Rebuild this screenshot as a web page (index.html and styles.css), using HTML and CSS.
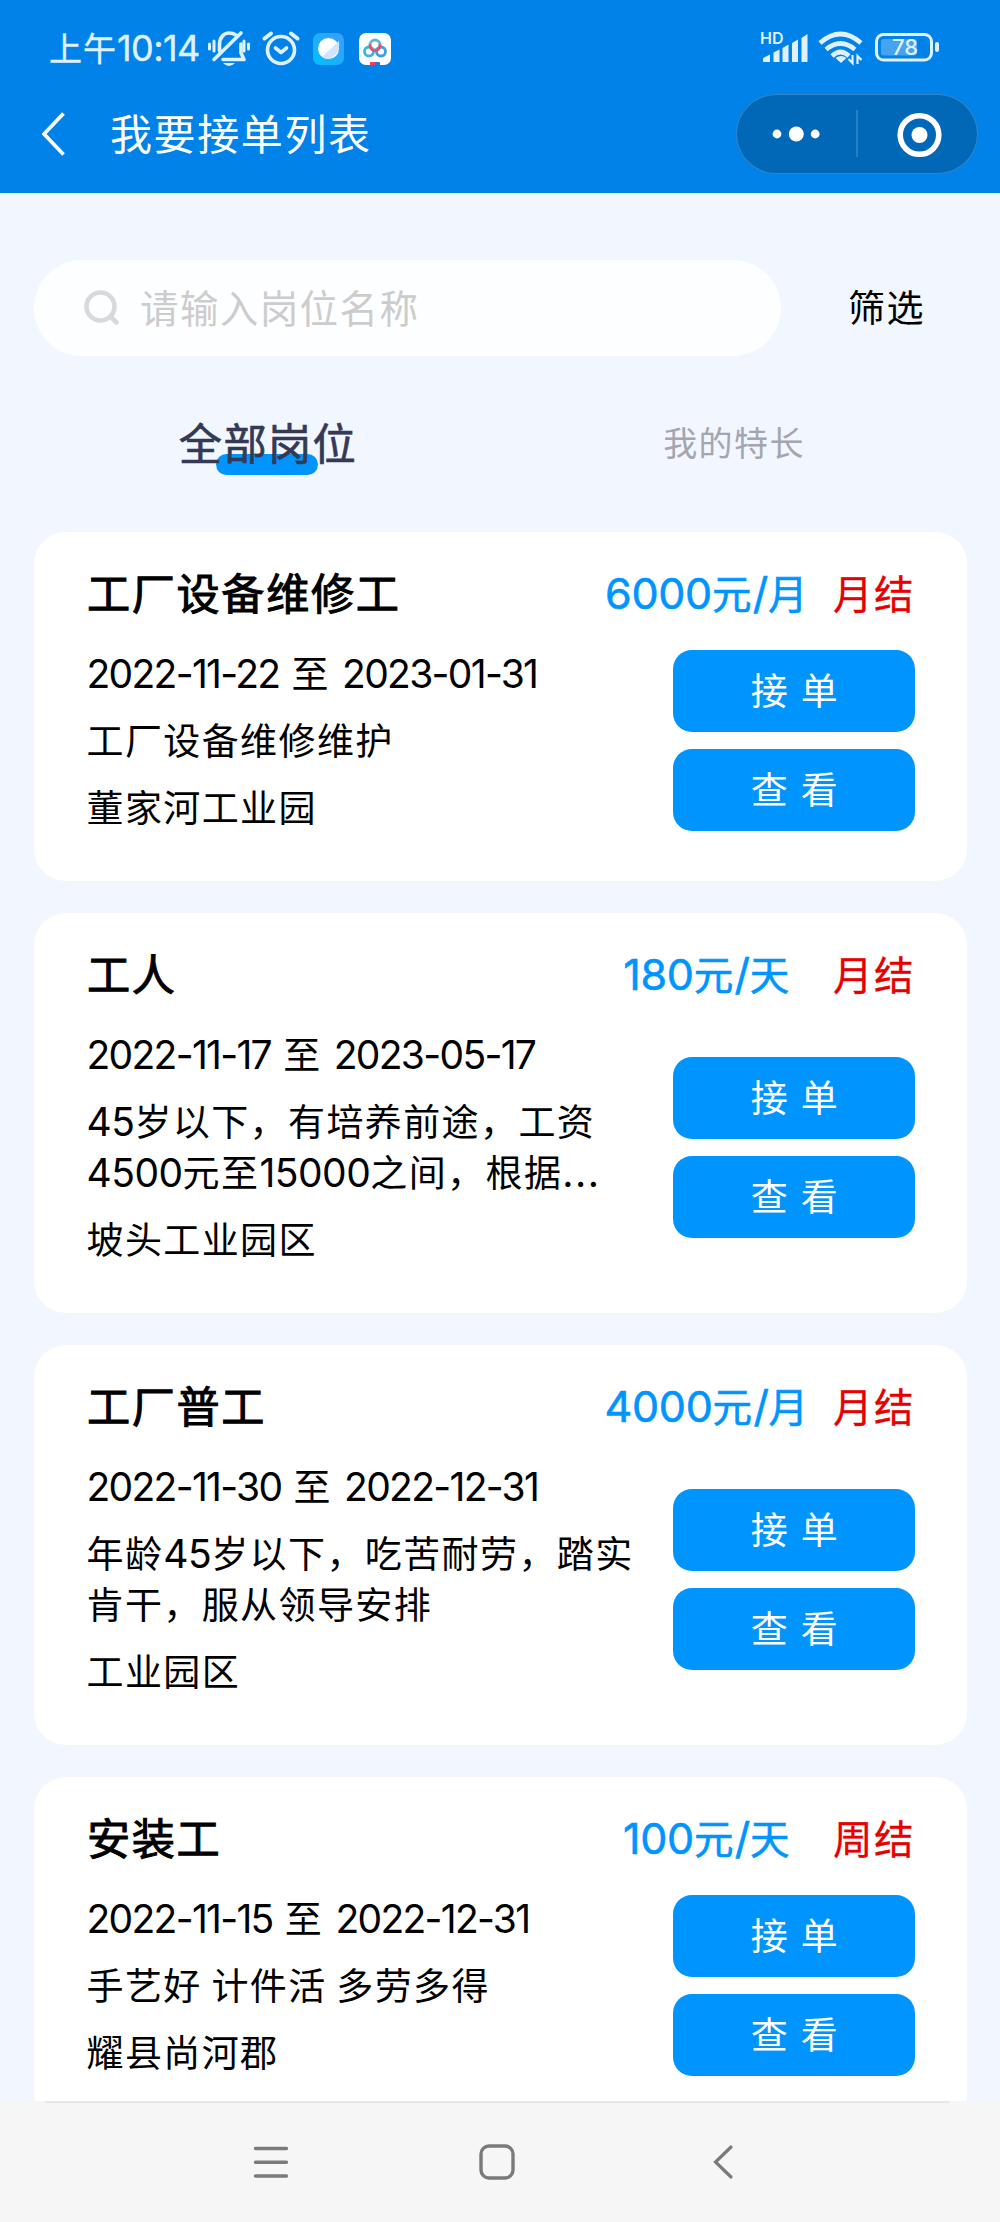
FILE: index.html
```html
<!DOCTYPE html>
<html lang="zh-CN">
<head>
<meta charset="utf-8">
<title>我要接单列表</title>
<link rel="stylesheet" href="styles.css">
</head>
<body>
<div class="screen">
  <header class="header">
    <div class="status">
      <div class="status-left">
        <span class="clock">上午<span class="clock-num">10:14</span></span>
        <svg class="status-icons" width="190" height="40" viewBox="0 0 190 40" fill="none" stroke="#dff1ff" stroke-width="3.600" stroke-linecap="round" stroke-linejoin="round">
          <path d="M12.500 23V17C12.500 9 17 5 22 5c3 0 5 .7 7 2M34 16v9l3 6.500H16M7 31.500 34 5" stroke-width="3.600"/>
          <path d="M2.500 16v5M7 13v10M37 13v10M41.500 16v5" stroke-width="3"/>
          <path d="M16 35h12q-6 6-12 0z" fill="#dff1ff" stroke="none"/>
          <circle cx="74" cy="22" r="13.500"/><path d="M68.500 20l5.500 4.500 5.500-4.500"/><path d="M57.500 10.500l6.500-5M90.500 10.500l-6.500-5" stroke-width="4"/>
          <rect x="106" y="5" width="31" height="32" rx="7" fill="url(#app)" stroke="none"/>
          <circle cx="121.500" cy="20.500" r="10.500" fill="#fff" stroke="none"/><path d="M115 29 132 13q1 9-3 13-7 8-14 3z" fill="#cfe4ff" stroke="none"/>
          <rect x="152" y="5" width="32" height="32" rx="7" fill="#fff" stroke="none"/>
          <g stroke-width="2.800"><circle cx="162" cy="23.500" r="4.500" stroke="#3bb4e0"/><circle cx="174" cy="23.500" r="4.500" stroke="#3b9fe0"/><circle cx="168" cy="17" r="5" stroke="#5bb8dd"/><path d="M163 17.500a5 5 0 0 0 10 0" stroke="#e8506e"/></g>
          <path d="M163 35.500h5" stroke="#e8405e" stroke-width="3" stroke-linecap="butt"/><path d="M168 35.500h5" stroke="#3070e0" stroke-width="3" stroke-linecap="butt"/>
          <defs><linearGradient id="app" x1="0" y1="1" x2="1" y2="0"><stop stop-color="#00c0ff"/><stop offset="1" stop-color="#3d9bff"/></linearGradient></defs>
        </svg>
      </div>
      <svg class="status-right" width="184" height="40" viewBox="0 0 184 40" fill="#dff1ff">
        <text class="hd" x="0" y="16.500">HD</text>
        <path d="M3 35v-3q0-1 1-1.500l6-3V35zM13.500 35V25.500l6-3V35zM22.500 35V21l6-3.500V35zM32 35V16l6-3.500V35zM41.500 35V11l6-4V35z"/>
        <g fill="none" stroke="#dff1ff" stroke-width="4.600"><path d="M60 16q20.500-18 41 0M66 22.500q14.500-12 29 0M72 29q8.500-8 17 0"/></g>
        <path d="M75.500 31q5.500-4 11 0l-5.500 5z"/><path d="M92.500 28v8l-4-4M97.500 37v-8l4 4" fill="none" stroke="#dff1ff" stroke-width="2.200"/>
        <rect x="116.500" y="7.500" width="55" height="25.500" rx="7" fill="none" stroke="#dff1ff" stroke-width="3"/>
        <rect x="121" y="12" width="36" height="16.500" rx="3" fill="#45a3f0"/>
        <rect x="175" y="15" width="4" height="10" rx="2"/>
        <text class="pct" x="132" y="28.300">78</text>
      </svg>
    </div>
    <div class="navbar">
      <svg class="back" width="24" height="44" viewBox="0 0 24 44"><path d="M21.500 1.500 2 22l19.500 20.500" fill="none" stroke="#fff" stroke-width="3.700"/></svg>
      <h1 class="page-title">我要接单列表</h1>
      <div class="capsule">
        <svg width="242" height="80" viewBox="0 0 242 80" fill="#fff">
          <circle cx="41" cy="40" r="4.400"/><circle cx="60.300" cy="40" r="7.500"/><circle cx="79.200" cy="40" r="4.400"/>
          <path d="M120.200 16h1.600v47h-1.600z" opacity=".2"/>
          <circle cx="183.500" cy="41" r="19.300" fill="none" stroke="#fff" stroke-width="5.600"/><circle cx="183.500" cy="41" r="8"/>
        </svg>
      </div>
    </div>
  </header>

  <main class="content">
    <div class="search-row">
      <div class="search">
        <svg width="36" height="36" viewBox="0 0 36 36" fill="none" stroke="#d9d9d9" stroke-width="4.600" stroke-linecap="round"><circle cx="16.500" cy="16.500" r="14"/><path d="M26.500 26.500 32.500 32.500"/></svg>
        <span class="placeholder">请输入岗位名称</span>
      </div>
      <span class="filter">筛选</span>
    </div>
    <nav class="tabs">
      <div class="tab active"><span>全部岗位</span></div>
      <div class="tab"><span>我的特长</span></div>
    </nav>

    <section class="cards">
      <article class="card">
        <div class="card-head"><h2>工厂设备维修工</h2><span class="price"><b>6000</b>元<b>/</b>月</span><span class="settle">月结</span></div>
        <div class="card-body">
          <div class="info"><p class="date"><b>2022-11-22</b> 至 <b>2023-01-31</b></p><p>工厂设备维修维护</p><p>董家河工业园</p></div>
          <div class="actions"><a class="btn">接 单</a><a class="btn">查 看</a></div>
        </div>
      </article>
      <article class="card">
        <div class="card-head"><h2>工人</h2><span class="price"><b>180</b>元<b>/</b>天</span><span class="settle">月结</span></div>
        <div class="card-body">
          <div class="info"><p class="date"><b>2022-11-17</b> 至 <b>2023-05-17</b></p><p><b>45</b>岁以下，有培养前途，工资<br><b>4500</b>元至<b>15000</b>之间，根据<b class="dots">...</b></p><p>坡头工业园区</p></div>
          <div class="actions"><a class="btn">接 单</a><a class="btn">查 看</a></div>
        </div>
      </article>
      <article class="card">
        <div class="card-head"><h2>工厂普工</h2><span class="price"><b>4000</b>元<b>/</b>月</span><span class="settle">月结</span></div>
        <div class="card-body">
          <div class="info"><p class="date"><b>2022-11-30</b> 至 <b>2022-12-31</b></p><p>年龄<b>45</b>岁以下，吃苦耐劳，踏实<br>肯干，服从领导安排</p><p>工业园区</p></div>
          <div class="actions"><a class="btn">接 单</a><a class="btn">查 看</a></div>
        </div>
      </article>
      <article class="card">
        <div class="card-head"><h2>安装工</h2><span class="price"><b>100</b>元<b>/</b>天</span><span class="settle">周结</span></div>
        <div class="card-body">
          <div class="info"><p class="date"><b>2022-11-15</b> 至 <b>2022-12-31</b></p><p>手艺好 计件活 多劳多得</p><p>耀县尚河郡</p></div>
          <div class="actions"><a class="btn">接 单</a><a class="btn">查 看</a></div>
        </div>
      </article>
    </section>
  </main>

  <footer class="sysnav">
    <div class="handle"></div>
    <div class="keys">
      <svg width="36" height="36" viewBox="0 0 36 36" stroke="#7a7a7a" stroke-width="3.400" stroke-linecap="round"><path d="M2.500 4.500h31M2.500 18.200h31M2.500 32h31"/></svg>
      <svg width="36" height="36" viewBox="0 0 36 36" fill="none" stroke="#7a7a7a" stroke-width="3.400"><rect x="2" y="2" width="32" height="32" rx="8"/></svg>
      <svg width="36" height="36" viewBox="0 0 36 36" fill="none" stroke="#7a7a7a" stroke-width="3.200" stroke-linecap="round"><path d="M26 3 10.500 18 26 33"/></svg>
    </div>
  </footer>
</div>
</body>
</html>
```
FILE: styles.css
```css
* { box-sizing: border-box; margin: 0; padding: 0; }
body { background: #f2f6ff; color: #000; font: 37px/51px "Noto Sans CJK SC", sans-serif; letter-spacing: 1.4px; }
.screen { width: 1000px; height: 2222px; overflow: hidden; display: flex; flex-direction: column; white-space: nowrap; }
svg { display: block; flex: none; }
b { font-family: Inter, "Noto Sans CJK SC", sans-serif; font-weight: 400; font-size: 39px; line-height: 1; letter-spacing: -.5px; }
.date b { letter-spacing: -1.700px; }
.date { word-spacing: 2.500px; }
.dots { letter-spacing: 1.500px; }

.header { flex: none; height: 193px; background: #0082e8; color: #fff; }
.status { height: 94px; padding: 28px 56px 0 49px; display: flex; justify-content: space-between; }
.status-left { display: flex; }
.clock { color: #dff1ff; font-size: 33px; line-height: 38px; letter-spacing: 1px; width: 158px; -webkit-text-stroke: .4px #dff1ff; }
.clock-num { font-family: Inter, sans-serif; font-size: 36px; letter-spacing: -.600px; }
.hd { font: 600 16px Inter, sans-serif; letter-spacing: 0; }
.pct { font: 500 22px Inter, sans-serif; letter-spacing: 0; }
.status-right { margin-top: -1px; }
.navbar { height: 80px; padding: 0 22px 0 42px; display: flex; align-items: center; }
.page-title { margin-left: 44px; padding-bottom: 4px; font-size: 42px; font-weight: 400; letter-spacing: 1.6px; line-height: 60px; }
.capsule { margin-left: auto; width: 242px; height: 80px; border-radius: 40px; background: #0068b7; box-shadow: inset 0 0 0 1px rgba(255,255,255,.2); }

.content { flex: 1; min-height: 0; overflow: hidden; padding: 67px 33px 0 34px; }
.search-row { display: flex; align-items: center; height: 96px; }
.search { width: 747px; height: 96px; border-radius: 48px; background: #fdfeff; display: flex; align-items: center; padding-left: 50px; }
.placeholder { margin-left: 20px; padding-bottom: 4px; font-size: 38.500px; color: #ccc; }
.filter { margin-left: 67px; padding-bottom: 3px; }
.tabs { display: flex; height: 176px; padding-top: 60px; }
.tab { width: 466px; display: flex; justify-content: center; font-size: 34px; line-height: 52px; color: #a3a6ae; letter-spacing: 1.4px; padding-left: 2px; }
.tab.active { font-size: 43.200px; line-height: 50px; color: #343a56; -webkit-text-stroke: .7px #343a56; }
.tab.active span { position: relative; z-index: 0; }
.tab.active span::before { content: ""; position: absolute; z-index: -1; left: 37px; top: 38px; width: 102px; height: 21px; border-radius: 11px; background: #0094ff; }

.cards { display: flex; flex-direction: column; gap: 32px; }
.card { flex: none; border-radius: 32px; background: #fff; padding: 36px 52px 48px; }
.card-head { display: flex; height: 51px; align-items: center; padding-bottom: 4px; }
.card-head h2 { flex: 1; font-size: 43.200px; font-weight: 400; letter-spacing: 1.600px; padding-left: 1px; -webkit-text-stroke: 1px #000; }
.price { width: 220px; text-align: center; color: #0094ff; font-size: 39.500px; -webkit-text-stroke: .6px #0094ff; }
.price b { font-size: 43px; letter-spacing: -.3px; }
.settle { width: 82px; margin-left: 16px; color: #e60000; font-size: 39.500px; letter-spacing: 1.500px; -webkit-text-stroke: .3px #e60000; }
.card-body { display: flex; justify-content: space-between; align-items: center; margin-top: 29px; }
.info { display: flex; flex-direction: column; gap: 16px; margin: -1.500px 0 1.500px .500px; }
.actions { display: flex; flex-direction: column; gap: 17px; }
.btn { width: 242px; height: 82px; border-radius: 19px; background: #0094ff; color: #fff; text-align: center; line-height: 79px; padding-left: 2px; word-spacing: 2px; }

.sysnav { flex: none; height: 121px; background: #f6f6f6; }
.handle { width: 904px; height: 2px; margin-left: 45px; background: #e6e6e6; }
.keys { display: flex; gap: 190px; padding: 41px 0 0 253px; }
```
